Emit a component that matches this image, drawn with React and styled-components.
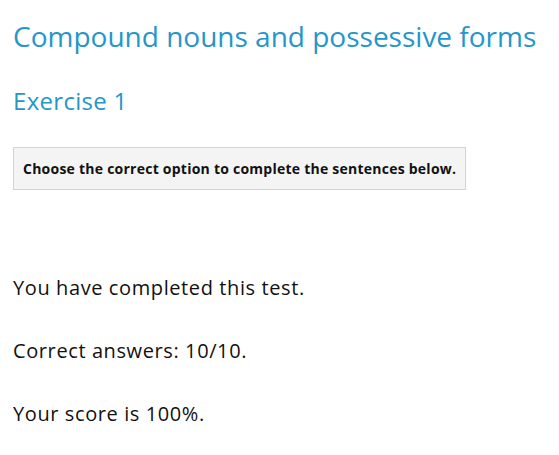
import React from 'react'
import styled, { createGlobalStyle } from 'styled-components'

const Global = createGlobalStyle`
    body {
        margin: 0;
        background: #fff;
        font-family: "Open Sans", "Liberation Sans", sans-serif;
    }
`

export default function App() {
    return (
        <Page>
            <Global />
            <Title>Compound nouns and possessive forms</Title>
            <Subtitle>Exercise 1</Subtitle>
            <Instruction>Choose the correct option to complete the sentences below.</Instruction>
            <Results>
                <Line>You have completed this test.</Line>
                <Line>Correct answers: 10/10.</Line>
                <Line>Your score is 100%.</Line>
            </Results>
        </Page>
    )
}

const Page = styled.main`
    padding: 0 13px;
`
const Title = styled.h1`
    margin: 0;
    padding-top: 17px;
    font-size: 28px;
    line-height: 38px;
    font-weight: 400;
    color: #2596c9;
`
const Subtitle = styled.h2`
    margin: 31px 0 0;
    font-size: 24px;
    line-height: 30px;
    font-weight: 400;
    letter-spacing: 0.3px;
    color: #2596c9;
`
const Instruction = styled.div`
    display: inline-block;
    margin-top: 31px;
    padding: 11px 9px;
    background: #f4f4f4;
    border: 1px solid #d4d4d4;
    font-size: 14px;
    line-height: 19px;
    font-weight: 700;
    letter-spacing: 0.24px;
    color: #111;
`
const Results = styled.div`
    margin-top: 85px;
    display: flex;
    flex-direction: column;
    gap: 37px;
`
const Line = styled.p`
    margin: 0;
    font-size: 20px;
    line-height: 26px;
    letter-spacing: 0.6px;
    color: #111;
`
